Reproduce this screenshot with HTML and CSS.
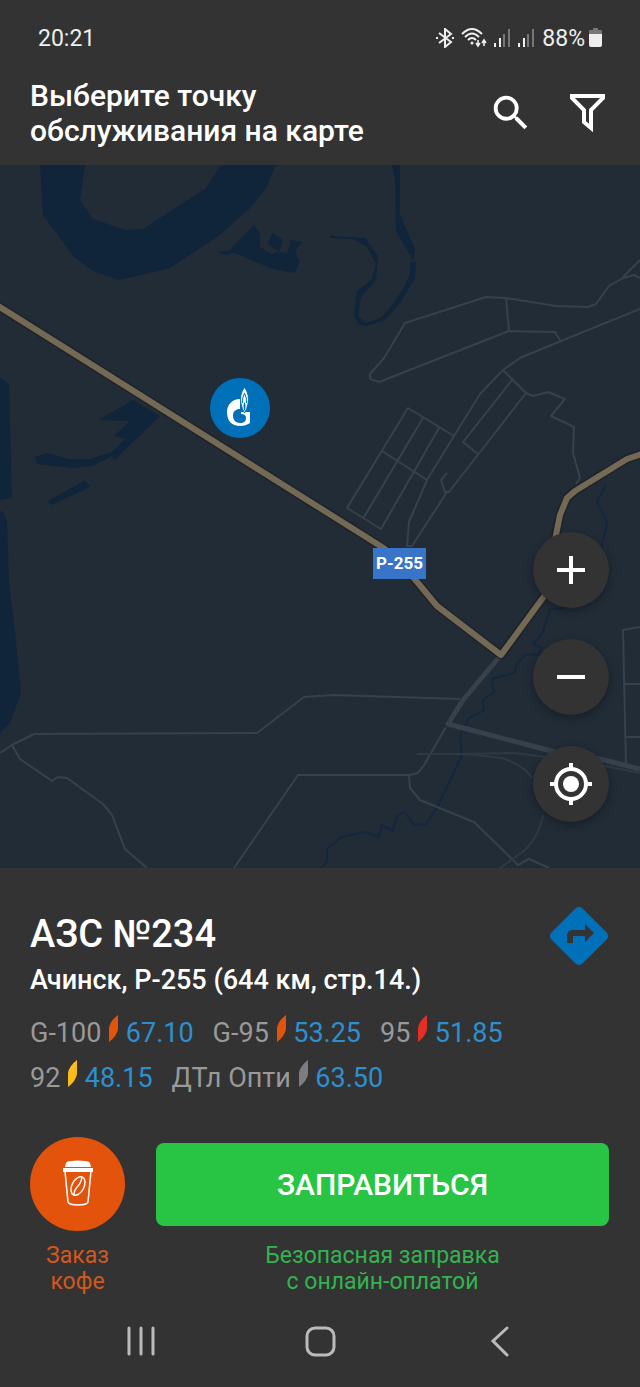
FILE: index.html
```html
<!DOCTYPE html>
<html lang="ru">
<head>
    <meta charset="UTF-8">
    <meta name="viewport" content="width=device-width, initial-scale=1.0">
    <title>Выберите точку обслуживания на карте</title>
    <link rel="stylesheet" href="styles.css">
</head>
<body>
<div class="statusbar">
    <span class="time">20:21</span>
    <div class="status-icons">
        <svg width="18" height="20" viewBox="0 0 18 20" fill="none" stroke="#eee" stroke-width="2">
            <path d="M3 5l12 9-6 5V1l6 5-12 9"/>
            <path d="M1 9v2M17 9v2"/>
        </svg>
        <svg width="26" height="20" viewBox="0 0 26 20" fill="none" stroke="#eee" stroke-width="2">
            <path d="M1 6Q11-4 21 6M4 9Q11 2 18 9M7 12Q11 8 15 12"/>
            <circle cx="11" cy="15" r="1.5" fill="#eee" stroke="none"/>
            <path d="M17 12v6M15 15l2 3 2-3M23 18v-6M21 15l2-3 2 3" stroke-width="1.6"/>
        </svg>
        <svg width="17" height="18" viewBox="0 0 17 18">
            <path d="M0 14h2v4H0zM5 9h2v9H5z" fill="#eee"/>
            <path d="M9 5h2v13H9zM14 0h2v18h-2z" fill="#777"/>
        </svg>
        <svg width="17" height="18" viewBox="0 0 17 18">
            <path d="M0 14h2v4H0zM5 9h2v9H5z" fill="#eee"/>
            <path d="M9 5h2v13H9zM14 0h2v18h-2z" fill="#777"/>
        </svg>
        <span class="battery">88%</span>
        <svg width="13" height="20" viewBox="0 0 13 20">
            <path d="M4 0h5v2h3q1 0 1 1v4H0V3q0-1 1-1h3z" fill="#777"/>
            <path d="M0 6h13v11q0 2-2 2H2q-2 0-2-2z" fill="#eee"/>
        </svg>
    </div>
</div>
<header class="header">
    <h2 class="title">Выберите точку<br>обслуживания на карте</h2>
    <div class="header-buttons">
        <button class="icon-button" aria-label="Поиск">
            <svg width="46" height="46" viewBox="0 0 24 24" fill="#fff">
                <path d="M15.5 14h-.79l-.28-.27A6.47 6.47 0 0 0 16 9.5 6.5 6.5 0 1 0 9.5 16c1.61 0 3.09-.59 4.23-1.57l.27.28v.79l5 4.99L20.49 19zm-6 0a4.5 4.5 0 1 1 0-9 4.5 4.5 0 0 1 0 9z"/>
            </svg>
        </button>
        <button class="icon-button" aria-label="Фильтр">
            <svg width="46" height="46" viewBox="0 0 46 46" fill="none" stroke="#fff" stroke-width="4">
                <path d="M8 6v2L20 20V32L27 38V20L39 8V6z"/>
            </svg>
        </button>
    </div>
</header>
<main class="map">
    <svg class="map-canvas" viewBox="0 165 640 703" preserveAspectRatio="xMidYMid slice">
        <!-- water -->
        <g class="water">
            <path d="M40 165L43 215 74 257 93 271 119 280 170 268 220 235 250 208 266 188 276 165H221L206 188 143 229 125 230 93 219 80 200 85 165z"/>
            <path d="M218 252L230 250 254 225 260 233V247L272 254 278 251 268 244 272 233 283 240 279 252 287 254 291 240 302 242 296 250 297 258 300 260 295 273 273 269 234 253 225 255z"/>
            <path d="M0 378L9 384 12 498 0 500z"/>
            <path d="M0 511L3 512 7 522 9 583 15 632 21 693 10 723 0 733z"/>
            <path d="M35 457L47 453 68 459H90L112 452 125 439 114 436 130 421 98 420 133 400 160 416 115 460 112 456 92 466 72 468 37 464z"/>
            <path d="M48 501L85 480 90 486 82 491 51 505z"/>
            <path d="M392 165H400V215L415 249 413 260 396 231 395 180z"/>
            <path d="M410 262H416L415 278 400 303 386 319 367 326 358 324 354 315 357 291 372 279 376 264 367 247 353 239 330 238V236L365 238 378 256 376 280 361 297 358 316 366 323 382 317 392 305 406 284 410 273z"/>
        </g>
        <path class="creek" d="M606 485L597 502 604 515 607 523 602 545V585L575 605 560 609 550 609 543 632 533 644 542 648 538 655 526 654 516 665 515 673 492 679 494 692 483 700 484 710 469 718 460 735 462 755 438 806 425 825 413 824 405 812 397 815 393 831 381 825 379 837 365 832 341 837 327 849V862L321 868"/>
        <!-- streets -->
        <g class="street">
            <path d="M640 260L623 277"/>
            <path d="M640 278L634 275 623 278 609 286 596 304 588 307 556 306 506 298 486 297 405 323 384 358 370 374V379L379 382 509 331 555 332 561 342"/>
            <path d="M506 298L509 331"/>
            <path d="M640 309L561 341 520 358 503 370 480 394 454 436 427 480 409 522 407 546H412L447 492"/>
            <path d="M503 370L526 393 533 396 548 392 565 399 551 416 574 427 573 453 580 478 576 484"/>
            <path d="M512 380L463 442 478 454"/>
            <path d="M526 393L449 492H445L441 480 447 473"/>
            <path d="M454 436L408 408 347 508 381 529 439 428M423 418L364 517M382 451L427 480"/>
            <path d="M0 753L12 745 34 734 257 733 304 697 334 695 460 699"/>
            <path d="M12 745L20 759 52 781 58 777 67 778 103 804 112 815 125 849 147 868"/>
            <path d="M234 868L298 775H410L418 773 424 765 446 727"/>
            <path d="M409 775L410 788 420 800 437 807 474 822 518 865 529 859 549 868"/>
            <path d="M640 627L623 630 626 765M624 684H640M626 737H640"/>
        </g>
        <path class="rail" d="M417 754H465L515 753 545 757M465 754L502 758Q525 766 532 778M543 815Q540 835 525 850L500 868M600 765L640 773"/>
        <path class="avenue" d="M501 655L463 700 448 724 555 752 600 759 640 769"/>
        <!-- highway -->
        <path class="highway-edge" d="M-5 304L382 547 397 558 413 577 437 606 501 655 545 595 555 540 560 515 567 498 575 491 627 459 645 453"/>
        <path class="highway" d="M-5 304L382 547 397 558 413 577 437 606 501 655 545 595 555 540 560 515 567 498 575 491 627 459 645 453"/>
    </svg>
    <div class="road-sign">Р-255</div>
    <button class="marker" aria-label="АЗС №234">
        <svg width="60" height="60" viewBox="0 0 60 60">
            <path fill="#fff" d="M30 21C22 21 17 27 17 34 17 43 22 48 30 48 34 48 37 47 40 45V34H31V36C34 36 36 37 36 40 36 43 34 45 30 45 26 45 23 42 23 38 23 33 26 31 30 31z"/>
            <path fill="#fff" stroke="#0070b8" d="M34.500 9Q29 17 31 26 32 31 34.500 35 37 31 38 26 40 17 34.500 9z"/>
            <path fill="none" stroke="#0070b8" d="M32.500 25Q32 20 34.500 15 37 20 36.500 25"/>
            <path fill="#0070b8" d="M34.500 24Q32.500 28 34.500 33 36.500 28 34.500 24z"/>
        </svg>
    </button>
    <div class="map-controls">
        <button class="round-button" aria-label="Приблизить">
            <svg width="44" height="44" viewBox="0 0 44 44" stroke="#fff" stroke-width="4">
                <path d="M8 22h28M22 8v28"/>
            </svg>
        </button>
        <button class="round-button" aria-label="Отдалить">
            <svg width="44" height="44" viewBox="0 0 44 44" stroke="#fff" stroke-width="4">
                <path d="M8 22h28"/>
            </svg>
        </button>
        <button class="round-button" aria-label="Моё местоположение">
            <svg width="44" height="44" viewBox="0 0 44 44" fill="none" stroke="#fff" stroke-width="4">
                <circle cx="22" cy="22" r="15"/>
                <circle cx="22" cy="22" r="8" fill="#fff" stroke="none"/>
                <path d="M22 1v6M22 37v6M1 22h6M37 22h6"/>
            </svg>
        </button>
    </div>
</main>
<section class="panel">
    <div class="station">
        <div class="station-text">
            <h1 class="name">АЗС №234</h1>
            <p class="address">Ачинск, Р-255 (644 км, стр.14.)</p>
        </div>
        <button class="route" aria-label="Маршрут">
            <svg width="60" height="60" viewBox="0 0 60 60">
                <rect x="8" y="8" width="44" height="44" rx="5" fill="#0070b8" transform="rotate(45 30 30)"/>
                <path fill="#333" d="M18 37V30q0-6 6-6H36V18l9 9-9 9V30H24v7z"/>
            </svg>
        </button>
    </div>
    <ul class="prices">
        <li class="fuel">G-100 <svg class="leaf orange" viewBox="0 0 9 27"><path d="M9 0V14Q8 21 0 27V13Q1 6 9 0z"/></svg> <span class="price">67.10</span></li>
        <li class="fuel">G-95 <svg class="leaf orange" viewBox="0 0 9 27"><path d="M9 0V14Q8 21 0 27V13Q1 6 9 0z"/></svg> <span class="price">53.25</span></li>
        <li class="fuel">95 <svg class="leaf red" viewBox="0 0 9 27"><path d="M9 0V14Q8 21 0 27V13Q1 6 9 0z"/></svg> <span class="price">51.85</span></li>
        <li class="fuel">92 <svg class="leaf yellow" viewBox="0 0 9 27"><path d="M9 0V14Q8 21 0 27V13Q1 6 9 0z"/></svg> <span class="price">48.15</span></li>
        <li class="fuel">ДТл Опти <svg class="leaf gray" viewBox="0 0 9 27"><path d="M9 0V14Q8 21 0 27V13Q1 6 9 0z"/></svg> <span class="price">63.50</span></li>
    </ul>
    <div class="actions">
        <div class="coffee">
            <button class="coffee-button" aria-labelledby="coffee-text">
                <svg width="32" height="48" viewBox="0 0 32 48" fill="none" stroke="#fff" stroke-width="1.5">
                    <path fill="#fff" stroke="none" d="M3 7L4 3Q5 1 9 1 16 0 23 1 27 1 28 3L29 7zM1 8H31V12H1z"/>
                    <path d="M3 11L6 42Q7 45 16 45 25 45 26 42L29 11"/>
                    <ellipse cx="16" cy="26" rx="6" ry="10" transform="rotate(27 16 26)"/>
                    <path d="M20 17Q19 23 16 26 12 30 12 35"/>
                </svg>
            </button>
            <span class="caption" id="coffee-text">Заказ<br>кофе</span>
        </div>
        <div class="refuel">
            <button class="refuel-button">ЗАПРАВИТЬСЯ</button>
            <span class="caption">Безопасная заправка<br>с онлайн-оплатой</span>
        </div>
    </div>
</section>
<nav class="navbar">
    <button class="icon-button" aria-label="Последние">
        <svg width="32" height="32" viewBox="0 0 32 32" stroke="#bbb" stroke-width="3" stroke-linecap="round">
            <path d="M4 3v26M16 3v26M28 3v26"/>
        </svg>
    </button>
    <button class="icon-button" aria-label="Домой">
        <svg width="32" height="32" viewBox="0 0 32 32" fill="none" stroke="#bbb" stroke-width="3">
            <rect x="3" y="3" width="27" height="27" rx="8"/>
        </svg>
    </button>
    <button class="icon-button" aria-label="Назад">
        <svg width="32" height="32" viewBox="0 0 32 32" fill="none" stroke="#bbb" stroke-width="3" stroke-linecap="round">
            <path d="M24 3L10 16 24 30"/>
        </svg>
    </button>
</nav>
</body>
</html>
```
FILE: styles.css
```css
*{
    box-sizing: border-box;
}
body{
    margin: 0;
    min-height: 100vh;
    display: flex;
    flex-direction: column;
    background-color: #333;
    color: #fff;
    font-family: Roboto, "Liberation Sans", sans-serif;
}
h1, h2, p, ul{
    margin: 0;
    padding: 0;
}
button{
    padding: 0;
    border: none;
    background: none;
    color: inherit;
    font: inherit;
    cursor: pointer;
}
svg{
    display: block;
}

/* top */
.statusbar{
    height: 76px;
    padding: 0 38px;
    display: flex;
    justify-content: space-between;
    align-items: center;
    color: #eee;
    font-size: 23px;
}
.status-icons{
    display: flex;
    align-items: center;
    gap: 7px;
}
.battery{
    margin-right: -3px;
}
.header{
    padding: 2px 30px 17px;
    display: flex;
    justify-content: space-between;
    align-items: center;
}
.title{
    font-size: 30px;
    line-height: 35px;
    font-weight: 500;
}
.header-buttons{
    display: flex;
    gap: 30px;
}

/* map */
.map{
    position: relative;
    flex: 1;
    min-height: 420px;
    overflow: hidden;
    background-color: #212c37;
}
.map-canvas{
    position: absolute;
    width: 100%;
    height: 100%;
    fill: none;
    stroke-linejoin: round;
}
.water{
    fill: #10243a;
}
.creek{
    stroke: #14273f;
    stroke-width: 2;
}
.street{
    stroke: #36414b;
    stroke-width: 2;
}
.rail{
    stroke: #2e3944;
    stroke-width: 2;
}
.avenue{
    stroke: #36414b;
    stroke-width: 5;
}
.highway-edge{
    stroke: #1f2329;
    stroke-width: 9;
}
.highway{
    stroke: #736955;
    stroke-width: 6;
}
.road-sign{
    position: absolute;
    left: 373px;
    top: 383px;
    width: 53px;
    line-height: 31px;
    background-color: #3874c8;
    font-size: 17px;
    font-weight: 700;
    text-align: center;
}
.marker{
    position: absolute;
    left: 210px;
    top: 213px;
    border-radius: 50%;
    background-color: #0070b8;
}
.map-controls{
    position: absolute;
    right: 31px;
    bottom: 46px;
    display: flex;
    flex-direction: column;
    gap: 31px;
}
.round-button{
    width: 76px;
    height: 76px;
    display: flex;
    justify-content: center;
    align-items: center;
    border-radius: 50%;
    background-color: #333;
    box-shadow: 0 3px 8px rgba(0, 0, 0, .3);
}

/* station */
.panel{
    padding: 38px 31px 0 30px;
}
.station{
    display: flex;
    justify-content: space-between;
    align-items: flex-start;
}
.name{
    font-size: 38px;
    line-height: 56px;
    font-weight: 500;
}
.address{
    font-size: 27px;
    line-height: 36px;
    font-weight: 500;
}
.prices{
    margin-top: 13px;
    display: flex;
    flex-wrap: wrap;
    column-gap: 19px;
    list-style: none;
    color: #999;
    font-size: 27px;
    line-height: 45px;
}
.leaf{
    display: inline;
    width: 9px;
    height: 27px;
    margin: 0 1px;
}
.orange{
    fill: #e2530b;
}
.red{
    fill: #e62e25;
}
.yellow{
    fill: #fcbd1c;
}
.gray{
    fill: #7d7d7d;
}
.price{
    color: #2e8fd0;
}
.actions{
    margin-top: 36px;
    display: flex;
    gap: 31px;
}
.coffee, .refuel{
    display: flex;
    flex-direction: column;
    text-align: center;
}
.coffee{
    color: #d2581c;
}
.refuel{
    flex: 1;
    padding-top: 6px;
    color: #34b350;
}
.coffee-button{
    width: 95px;
    height: 94px;
    margin-bottom: 12px;
    display: flex;
    justify-content: center;
    align-items: center;
    border-radius: 50%;
    background-color: #e4530b;
}
.refuel-button{
    height: 83px;
    margin-bottom: 17px;
    border-radius: 8px;
    background-color: #28c545;
    color: #fff;
    font-size: 30px;
    font-weight: 500;
}
.caption{
    font-size: 23px;
    line-height: 26px;
}

/* bottom */
.navbar{
    height: 92px;
    padding: 0 51px;
    display: grid;
    grid-template-columns: repeat(3, 1fr);
    justify-items: center;
    align-items: center;
}
```
